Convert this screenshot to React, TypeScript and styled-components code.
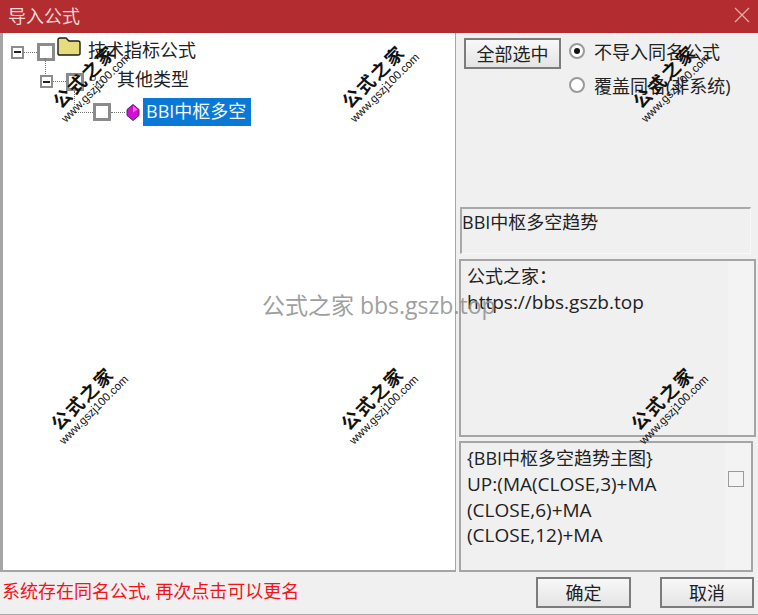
import styled, { createGlobalStyle } from 'styled-components';

const GlobalStyle = createGlobalStyle`
  html, body {
    margin: 0;
    padding: 0;
    background: #f0f0f0;
  }
  * {
    box-sizing: border-box;
  }
`;

const ui = `'Open Sans', 'Noto Sans CJK SC', sans-serif`;

const Win = styled.div`
  position: relative;
  width: 758px;
  height: 615px;
  display: flex;
  flex-direction: column;
  overflow: hidden;
  background: #f0f0f0;
  font-family: ${ui};
  font-size: 18px;
  color: #222;
  border-bottom: 1px solid #a8a8a8;
`;

const TitleBar = styled.div`
  flex: 0 0 33px;
  display: flex;
  align-items: center;
  justify-content: space-between;
  padding: 0 8px 4px 8px;
  background: #b22c30;
  color: #f3d5d5;
  font-size: 18px;
`;

const Body = styled.div`
  flex: 0 0 538px;
  display: flex;
  gap: 3px;
`;

const TreePanel = styled.div`
  width: 456px;
  background: #fff;
  border-left: 3px solid #a5a5a5;
  border-right: 1px solid #a5a5a5;
  border-bottom: 2px solid #a5a5a5;
  padding-top: 4px;
`;

const TreeRow = styled.div<{ $indent: number; $h: number }>`
  display: flex;
  align-items: center;
  height: ${({ $h }) => $h}px;
  padding-left: ${({ $indent }) => $indent}px;
`;

const Expander = styled.span`
  position: relative;
  width: 13px;
  height: 13px;
  border: 2px solid #8d8d8d;
  background: #fff;
  flex-shrink: 0;
  &::after {
    content: '';
    position: absolute;
    left: 1px;
    right: 1px;
    top: 3.5px;
    height: 2px;
    background: #222;
  }
`;

const Dots = styled.span<{ $w: number }>`
  width: ${({ $w }) => $w}px;
  border-top: 1px dotted #777;
  flex-shrink: 0;
`;

const CheckBox = styled.span`
  width: 18px;
  height: 18px;
  border: 3px solid #8b8b8b;
  background: #fff;
  flex-shrink: 0;
`;

const VDots = styled.span<{ $left: number; $top: number; $h: number }>`
  position: absolute;
  left: ${({ $left }) => $left}px;
  top: ${({ $top }) => $top}px;
  height: ${({ $h }) => $h}px;
  border-left: 1px dotted #777;
`;

const Label = styled.span<{ $gap: number }>`
  margin-left: ${({ $gap }) => $gap}px;
  padding-bottom: 5px;
  font-size: 18px;
  white-space: nowrap;
  line-height: 24px;
`;

const Selected = styled.span`
  margin-left: 3px;
  width: 108px;
  height: 28px;
  background: #0a78d7;
  color: #f4f9ff;
  font-size: 18px;
  line-height: 26px;
  padding-left: 3px;
  white-space: nowrap;
`;

const Side = styled.div`
  width: 296px;
  display: flex;
  flex-direction: column;
`;

const OptionsArea = styled.div`
  height: 174px;
  display: flex;
  align-items: flex-start;
  padding: 5px 0 0 5px;
`;

const PushButton = styled.button<{ $w: number; $h: number }>`
  width: ${({ $w }) => $w}px;
  height: ${({ $h }) => $h}px;
  padding: 0 0 2px;
  border: 2px solid #7c7c7c;
  border-radius: 0;
  background: linear-gradient(#f8f8f8, #e4e4e4);
  color: #222;
  font-family: ${ui};
  font-size: 18px;
`;

const RadioList = styled.div`
  margin-left: 8px;
  display: flex;
  flex-direction: column;
  gap: 10px;
  padding-top: 1px;
`;

const RadioRow = styled.div`
  display: flex;
  align-items: center;
  gap: 9px;
  height: 24px;
  font-size: 18px;
  white-space: nowrap;
`;

const Radio = styled.span<{ $on?: boolean }>`
  position: relative;
  width: 16px;
  height: 16px;
  border-radius: 50%;
  border: 2px solid #9a9a9a;
  background: #fff;
  flex-shrink: 0;
  &::after {
    content: '';
    display: ${({ $on }) => ($on ? 'block' : 'none')};
    position: absolute;
    left: 3px;
    top: 3px;
    width: 6px;
    height: 6px;
    border-radius: 50%;
    background: #111;
  }
`;

const NameBox = styled.div`
  width: 291px;
  height: 47px;
  margin-left: 1px;
  border-top: 2px solid #a9a9a9;
  border-left: 2px solid #a9a9a9;
  border-right: 1px solid #f8f8f8;
  border-bottom: 1px solid #f8f8f8;
  font-size: 18px;
  line-height: 26px;
`;

const InfoBox = styled.div<{ $w: number; $h: number; $mt: number }>`
  position: relative;
  width: ${({ $w }) => $w}px;
  height: ${({ $h }) => $h}px;
  margin-top: ${({ $mt }) => $mt}px;
  border: 2px solid #a5a5a5;
  background: linear-gradient(to right, #f0f0f0 91%, #f3f3f3 91%);
  padding: 3px 6px;
  font-size: 18px;
  line-height: 25.8px;
`;

const TextLine = styled.div<{ $latin?: boolean }>`
  font-size: ${({ $latin }) => ($latin ? '19px' : '18px')};
  white-space: nowrap;
`;

const SmallCheck = styled.span`
  position: absolute;
  right: 7px;
  top: 28px;
  width: 16px;
  height: 16px;
  border: 1px solid #9a9a9a;
  background: #f4f4f4;
`;

const Footer = styled.div`
  flex: 1;
  display: flex;
  align-items: center;
  justify-content: space-between;
  padding: 0 4px 0 2px;
`;

const Status = styled.span`
  color: #f5121b;
  font-size: 18px;
  white-space: nowrap;
  margin-top: -6px;
`;

const FooterButtons = styled.div`
  display: flex;
  gap: 29px;
  margin-top: -2px;
`;

const CenterMark = styled.div`
  position: absolute;
  left: 262px;
  top: 290px;
  color: #8f8f8f;
  font-size: 23px;
  line-height: 30px;
  white-space: nowrap;
  pointer-events: none;
  opacity: 0.85;
`;

const Stamp = styled.div<{ $x: number; $y: number }>`
  position: absolute;
  left: ${({ $x }) => $x}px;
  top: ${({ $y }) => $y}px;
  width: 110px;
  height: 40px;
  display: flex;
  flex-direction: column;
  align-items: center;
  transform: translate(-50%, -50%) rotate(-45deg);
  color: #111;
  pointer-events: none;
`;

const StampTitle = styled.span`
  font-family: 'Noto Sans CJK SC', serif;
  font-weight: 700;
  font-size: 18px;
  line-height: 22px;
  letter-spacing: 2px;
  white-space: nowrap;
`;

const StampUrl = styled.span`
  font-family: 'Liberation Sans', sans-serif;
  font-size: 11.5px;
  line-height: 13px;
  white-space: nowrap;
`;

function CloseIcon() {
  return (
    <svg width="16" height="16" viewBox="0 0 16 16">
      <path d="M1 1 L15 15 M15 1 L1 15" stroke="#e8a9a9" strokeWidth="1.3" fill="none" />
    </svg>
  );
}

function FolderIcon() {
  return (
    <svg width="24" height="19" viewBox="0 0 24 19" style={{ marginLeft: 2, marginTop: -11 }}>
      <path
        d="M1 17 V3 Q1 1 3 1 H9 L12 4 H21 Q23 4 23 6 V17 Q23 18 21 18 H3 Q1 18 1 17 Z"
        fill="#e6dc7c"
        stroke="#1c1c1c"
        strokeWidth="1.4"
      />
    </svg>
  );
}

function GearIcon() {
  return (
    <svg width="16" height="16" viewBox="0 0 16 16" style={{ marginLeft: 5 }}>
      <circle cx="4" cy="4" r="2.5" fill="#fff" stroke="#777" strokeWidth="1.2" />
      <circle cx="11" cy="10" r="3.5" fill="#fff" stroke="#777" strokeWidth="1.6" strokeDasharray="2 1" />
    </svg>
  );
}

function GemIcon() {
  return (
    <svg width="14" height="17" viewBox="0 0 14 16" style={{ marginLeft: 1 }}>
      <path d="M7 0 L13 5 V11 L7 16 L1 11 V5 Z" fill="#d40fd4" stroke="#4a1560" strokeWidth="0.9" />
      <path d="M7 1.5 L11.5 5 L7 8 Z" fill="#f070f0" />
    </svg>
  );
}

const stamps = [
  { x: 90, y: 82 },
  { x: 379, y: 82 },
  { x: 670, y: 82 },
  { x: 88, y: 404 },
  { x: 378, y: 404 },
  { x: 668, y: 404 },
];

export default function App() {
  return (
    <Win>
      <GlobalStyle />
      <TitleBar>
        <span>导入公式</span>
        <CloseIcon />
      </TitleBar>
      <Body>
        <TreePanel>
          <TreeRow $indent={8} $h={30}>
            <Expander />
            <Dots $w={13} />
            <CheckBox />
            <FolderIcon />
            <Label $gap={7}>技术指标公式</Label>
          </TreeRow>
          <TreeRow $indent={37} $h={29}>
            <Expander />
            <Dots $w={13} />
            <CheckBox />
            <GearIcon />
            <Label $gap={12}>其他类型</Label>
          </TreeRow>
          <TreeRow $indent={72} $h={32}>
            <Dots $w={18} />
            <CheckBox />
            <Dots $w={14} />
            <GemIcon />
            <Selected>BBI中枢多空</Selected>
          </TreeRow>
        </TreePanel>
        <Side>
          <OptionsArea>
            <PushButton $w={97} $h={31}>全部选中</PushButton>
            <RadioList>
              <RadioRow>
                <Radio $on />
                不导入同名公式
              </RadioRow>
              <RadioRow>
                <Radio />
                覆盖同名(非系统)
              </RadioRow>
            </RadioList>
          </OptionsArea>
          <NameBox>BBI中枢多空趋势</NameBox>
          <InfoBox $w={297} $h={178} $mt={5}>
            <TextLine>公式之家：</TextLine>
            <TextLine $latin>https://bbs.gszb.top</TextLine>
          </InfoBox>
          <InfoBox $w={294} $h={131} $mt={4}>
            <TextLine>{'{BBI中枢多空趋势主图}'}</TextLine>
            <TextLine $latin>UP:(MA(CLOSE,3)+MA</TextLine>
            <TextLine $latin>(CLOSE,6)+MA</TextLine>
            <TextLine $latin>(CLOSE,12)+MA</TextLine>
            <SmallCheck />
          </InfoBox>
        </Side>
      </Body>
      <Footer>
        <Status>系统存在同名公式, 再次点击可以更名</Status>
        <FooterButtons>
          <PushButton $w={95} $h={31}>确定</PushButton>
          <PushButton $w={94} $h={31}>取消</PushButton>
        </FooterButtons>
      </Footer>
      <VDots $left={45} $top={58} $h={18} />
      <VDots $left={74} $top={91} $h={14} />
      <CenterMark>公式之家 bbs.gszb.top</CenterMark>
      {stamps.map((s) => (
        <Stamp key={`${s.x}-${s.y}`} $x={s.x} $y={s.y}>
          <StampTitle>公式之家</StampTitle>
          <StampUrl>www.gszj100.com</StampUrl>
        </Stamp>
      ))}
    </Win>
  );
}
